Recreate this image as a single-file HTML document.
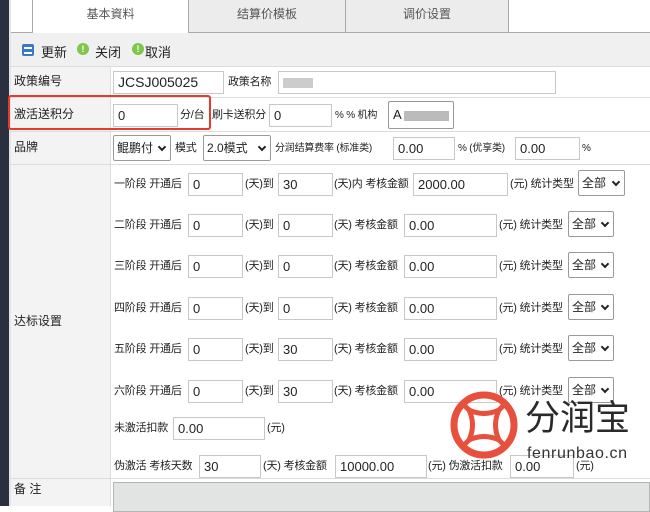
<!DOCTYPE html>
<html><head><meta charset="utf-8"><style>
*{margin:0;padding:0;box-sizing:border-box}
body{width:650px;height:506px;overflow:hidden;background:#fff;position:relative;font-family:"Liberation Sans","Noto Sans CJK SC",sans-serif;font-size:12px;color:#222}
.a{position:absolute;white-space:nowrap}
.t{position:absolute;white-space:nowrap;line-height:23px;height:23px;font-size:11px;letter-spacing:-0.2px}
.l{font-size:12px;letter-spacing:0}
.i{position:absolute;border:1px solid #c8c8c8;background:#fff;height:23px;line-height:21px;padding-left:4px;font-size:13px;color:#222}
.s{position:absolute;border:1px solid #9a9a9a;border-radius:2px;background:#fff;height:26px;line-height:24px;padding-left:3px;font-size:12px}
.s:after{content:"";position:absolute;right:5px;top:8px;width:4px;height:4px;border-right:2px solid #222;border-bottom:2px solid #222;transform:rotate(45deg)}
.h{position:absolute;left:10px;right:0;height:1px;background:#dcdcdc}
</style></head><body>
<div class="a" style="left:0;top:0;width:9px;height:506px;background:#2b3040"></div>
<div class="a" style="left:9px;top:0;width:2px;height:506px;background:#e4e4e4"></div>
<div class="a" style="left:11px;top:0;width:639px;height:33px;background:#fff"></div>
<div class="a" style="left:11px;top:32px;width:639px;height:1px;background:#aaa"></div>
<div class="a" style="left:32px;top:0;width:157px;height:33px;background:#fff;border-left:1px solid #aaa;border-right:1px solid #aaa;text-align:center;line-height:28px;color:#555">基本資料</div>
<div class="a" style="left:189px;top:0;width:157px;height:32px;background:#ececec;border-right:1px solid #aaa;text-align:center;line-height:28px;color:#555">结算价模板</div>
<div class="a" style="left:346px;top:0;width:163px;height:32px;background:#ececec;border-right:1px solid #aaa;text-align:center;line-height:28px;color:#555">调价设置</div>
<div class="a" style="left:11px;top:33px;width:639px;height:33px;background:#f0f0f0"></div>
<div class="a" style="left:22px;top:44px;width:12px;height:12px;background:#3a78c8;border-radius:2px"><div style="margin:3px 2px;height:2px;background:#fff"></div><div style="margin:0 2px;height:2px;background:#fff"></div></div>
<div class="a" style="left:41px;top:42px;font-size:13px">更新</div>
<div class="a" style="left:77px;top:43px;width:12px;height:12px;border-radius:50%;background:#7fc64a;color:#fff;font-size:9px;text-align:center;line-height:12px;font-weight:bold">!</div>
<div class="a" style="left:95px;top:42px;font-size:13px">关闭</div>
<div class="a" style="left:132px;top:43px;width:12px;height:12px;border-radius:50%;background:#7fc64a;color:#fff;font-size:9px;text-align:center;line-height:12px;font-weight:bold">!</div>
<div class="a" style="left:145px;top:42px;font-size:13px">取消</div>
<div class="a" style="left:11px;top:66px;width:99px;height:440px;background:#f3f3f3"></div>
<div class="a" style="left:110px;top:66px;width:1px;height:440px;background:#dcdcdc"></div>
<div class="h" style="top:66px"></div><div class="h" style="top:97px"></div><div class="h" style="top:131px"></div><div class="h" style="top:164px"></div><div class="h" style="top:478px"></div>
<div class="t l" style="left:14px;top:70px">政策编号</div>
<div class="t l" style="left:14px;top:103px">激活送积分</div>
<div class="t l" style="left:14px;top:136px">品牌</div>
<div class="t l" style="left:14px;top:310px">达标设置</div>
<div class="t l" style="left:14px;top:478px">备 注</div>
<div class="i" style="left:113px;top:71px;width:111px;font-size:14px">JCSJ005025</div>
<div class="t" style="left:228px;top:71px">政策名称</div>
<div class="i" style="left:278px;top:71px;width:278px"><span style="display:inline-block;margin-top:6px;width:30px;height:10px;background:#ccc"></span></div>
<div class="i" style="left:113px;top:104px;width:65px">0</div>
<div class="t" style="left:180px;top:104px">分/台</div>
<div class="t" style="left:212px;top:104px">刷卡送积分</div>
<div class="i" style="left:269px;top:104px;width:63px">0</div>
<div class="t" style="left:335px;top:104px;font-size:10px">% % 机构</div>
<div class="i" style="left:388px;top:101px;width:66px;height:28px;border-color:#999;border-radius:2px;line-height:26px">A<span style="display:inline-block;vertical-align:middle;margin-left:2px;width:45px;height:10px;background:#bbb"></span></div>
<div class="a" style="left:8px;top:95px;width:203px;height:35px;border:2px solid #e53b2c;border-radius:3px"></div>
<div class="s" style="left:113px;top:135px;width:58px;padding-right:14px">鲲鹏付</div>
<div class="t" style="left:175px;top:137px">模式</div>
<div class="s" style="left:203px;top:135px;width:68px">2.0模式</div>
<div class="t" style="left:275px;top:137px;font-size:10px">分润结算费率 (标准类)</div>
<div class="i" style="left:393px;top:137px;width:62px">0.00</div>
<div class="t" style="left:458px;top:137px;font-size:10px">% (优享类)</div>
<div class="i" style="left:515px;top:137px;width:65px">0.00</div>
<div class="t" style="left:582px;top:137px;font-size:10px">%</div>

<div class="t" style="left:114px;top:173px">一阶段 开通后</div><div class="i" style="left:188px;top:173px;width:55px">0</div><div class="t" style="left:245px;top:173px">(天)到</div><div class="i" style="left:278px;top:173px;width:55px">30</div><div class="t" style="left:334px;top:173px">(天)内 考核金额</div><div class="i" style="left:413px;top:173px;width:95px">2000.00</div><div class="t" style="left:510px;top:173px">(元) 统计类型</div><div class="s" style="left:578px;top:170px;width:47px">全部</div>

<div class="t" style="left:114px;top:214px">二阶段 开通后</div><div class="i" style="left:188px;top:214px;width:55px">0</div><div class="t" style="left:245px;top:214px">(天)到</div><div class="i" style="left:278px;top:214px;width:55px">0</div><div class="t" style="left:334px;top:214px">(天) 考核金额</div><div class="i" style="left:404px;top:214px;width:93px">0.00</div><div class="t" style="left:499px;top:214px">(元) 统计类型</div><div class="s" style="left:568px;top:211px;width:46px">全部</div>

<div class="t" style="left:114px;top:255px">三阶段 开通后</div><div class="i" style="left:188px;top:255px;width:55px">0</div><div class="t" style="left:245px;top:255px">(天)到</div><div class="i" style="left:278px;top:255px;width:55px">0</div><div class="t" style="left:334px;top:255px">(天) 考核金额</div><div class="i" style="left:404px;top:255px;width:93px">0.00</div><div class="t" style="left:499px;top:255px">(元) 统计类型</div><div class="s" style="left:568px;top:252px;width:46px">全部</div>

<div class="t" style="left:114px;top:297px">四阶段 开通后</div><div class="i" style="left:188px;top:297px;width:55px">0</div><div class="t" style="left:245px;top:297px">(天)到</div><div class="i" style="left:278px;top:297px;width:55px">0</div><div class="t" style="left:334px;top:297px">(天) 考核金额</div><div class="i" style="left:404px;top:297px;width:93px">0.00</div><div class="t" style="left:499px;top:297px">(元) 统计类型</div><div class="s" style="left:568px;top:294px;width:46px">全部</div>

<div class="t" style="left:114px;top:338px">五阶段 开通后</div><div class="i" style="left:188px;top:338px;width:55px">0</div><div class="t" style="left:245px;top:338px">(天)到</div><div class="i" style="left:278px;top:338px;width:55px">30</div><div class="t" style="left:334px;top:338px">(天) 考核金额</div><div class="i" style="left:404px;top:338px;width:93px">0.00</div><div class="t" style="left:499px;top:338px">(元) 统计类型</div><div class="s" style="left:568px;top:335px;width:46px">全部</div>

<div class="t" style="left:114px;top:380px">六阶段 开通后</div><div class="i" style="left:188px;top:380px;width:55px">0</div><div class="t" style="left:245px;top:380px">(天)到</div><div class="i" style="left:278px;top:380px;width:55px">30</div><div class="t" style="left:334px;top:380px">(天) 考核金额</div><div class="i" style="left:404px;top:380px;width:93px">0.00</div><div class="t" style="left:499px;top:380px">(元) 统计类型</div><div class="s" style="left:568px;top:377px;width:46px">全部</div>

<div class="t" style="left:114px;top:417px">未激活扣款</div><div class="i" style="left:173px;top:417px;width:92px">0.00</div><div class="t" style="left:267px;top:417px">(元)</div>

<div class="t" style="left:114px;top:455px">伪激活 考核天数</div><div class="i" style="left:199px;top:455px;width:62px">30</div><div class="t" style="left:263px;top:455px">(天) 考核金额</div><div class="i" style="left:335px;top:455px;width:92px">10000.00</div><div class="t" style="left:428px;top:455px">(元) 伪激活扣款</div><div class="i" style="left:510px;top:455px;width:64px">0.00</div><div class="t" style="left:576px;top:455px">(元)</div>
<div class="a" style="left:113px;top:482px;width:537px;height:30px;background:#e2e4e4;border:1px solid #b5b5b5"></div>
<svg class="a" style="left:447px;top:388px" width="76" height="76" viewBox="0 0 76 76">
<circle cx="37" cy="37" r="30" fill="none" stroke="#e8503e" stroke-width="7"/>
<path d="M22 22 Q37 29 52 22 Q45 37 52 52 Q37 45 22 52 Q29 37 22 22Z" fill="none" stroke="#e8503e" stroke-width="5" stroke-linejoin="round"/>
<path d="M22 22 L16 16 M52 22 L58 16 M52 52 L58 58 M22 52 L16 58" stroke="#e8503e" stroke-width="5"/>
</svg>
<div class="a" style="left:525px;top:393px;font-size:35px;line-height:46px;color:#2a2a2a;font-family:'Noto Sans CJK SC',sans-serif">分润宝</div>
<div class="a" style="left:527px;top:444px;font-size:16px;line-height:20px;color:#333;letter-spacing:0.6px">fenrunbao.cn</div>
</body></html>
